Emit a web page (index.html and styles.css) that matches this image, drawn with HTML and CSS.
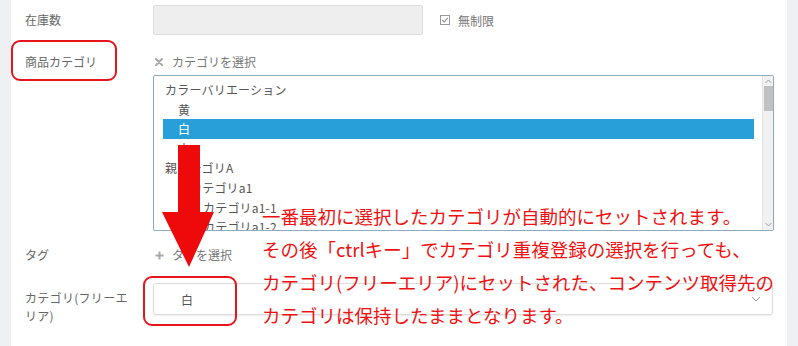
FILE: index.html
```html
<!DOCTYPE html>
<html lang="ja">
<head>
<meta charset="utf-8">
<title>商品カテゴリ</title>
<link rel="stylesheet" href="styles.css">
</head>
<body>
<div class="page">
  <div class="card">
    <div class="row row-stock">
      <div class="label">在庫数</div>
      <div class="ctrl ctrl-inline">
        <div class="input-disabled"></div>
        <label class="check">
          <svg class="check-icon" width="10" height="10" viewBox="0 0 10 10"><rect x="0.5" y="0.5" width="9" height="9" fill="none" stroke="#9a9a9a" stroke-width="1"/><path d="M2.3 5.2 L4.2 7 L7.8 2.8" fill="none" stroke="#8a8a8a" stroke-width="1.1"/></svg>
          <span>無制限</span>
        </label>
      </div>
    </div>

    <div class="row row-cat">
      <div class="label">商品カテゴリ</div>
      <div class="ctrl">
        <div class="picker"><svg class="picker-icon" width="8" height="8" viewBox="0 0 8 8"><path d="M1 1 L7 7 M7 1 L1 7" stroke="#a8a8a8" stroke-width="2" stroke-linecap="round"/></svg><span>カテゴリを選択</span></div>
        <div class="listbox">
          <div class="options">
            <div class="grp">カラーバリエーション</div>
            <div class="opt">黄</div>
            <div class="opt sel">白</div>
            <div class="opt">赤</div>
            <div class="grp">親カテゴリA</div>
            <div class="opt lv1">カテゴリa1</div>
            <div class="opt lv2">カテゴリa1-1</div>
            <div class="opt lv2">カテゴリa1-2</div>
          </div>
          <div class="scrollbar">
            <svg class="sb-arrow" width="9" height="7" viewBox="0 0 9 7"><path d="M1.5 5 L4.5 2 L7.5 5" fill="none" stroke="#a0a0a0" stroke-width="1"/></svg>
            <div class="sb-thumb"></div>
            <div class="sb-space"></div>
            <svg class="sb-arrow" width="9" height="7" viewBox="0 0 9 7"><path d="M1.5 2 L4.5 5 L7.5 2" fill="none" stroke="#a0a0a0" stroke-width="1"/></svg>
          </div>
        </div>
      </div>
    </div>

    <div class="row row-tag">
      <div class="label">タグ</div>
      <div class="ctrl">
        <div class="picker"><svg class="picker-icon plus" width="9" height="9" viewBox="0 0 9 9"><path d="M4.5 0.5 V8.5 M0.5 4.5 H8.5" stroke="#a8a8a8" stroke-width="2"/></svg><span>タグを選択</span></div>
      </div>
    </div>

    <div class="row row-free">
      <div class="label label-wrap">カテゴリ(フリーエリア)</div>
      <div class="ctrl">
        <div class="select">
          <span class="select-value">白</span>
          <svg class="chev" width="10" height="6" viewBox="0 0 10 6"><path d="M1 1 L5 5 L9 1" fill="none" stroke="#9a9a9a" stroke-width="1"/></svg>
        </div>
      </div>
    </div>
  </div>

  <div class="mark mark-label"></div>
  <div class="mark mark-select"></div>
  <svg class="arrow" width="56" height="124" viewBox="0 0 56 124"><path d="M16 0 H38 V67 H52 L27 122 L0 67 H16 Z" fill="#ee0a0a"/></svg>
  <div class="callout">
    <p>一番最初に選択したカテゴリが自動的にセットされます。</p>
    <p>その後「ctrlキー」でカテゴリ重複登録の選択を行っても、</p>
    <p>カテゴリ(フリーエリア)にセットされた、コンテンツ取得先の</p>
    <p>カテゴリは保持したままとなります。</p>
  </div>
</div>
</body>
</html>
```

FILE: styles.css
```css
* { box-sizing: border-box; }
html, body {
  margin: 0;
  padding: 0;
}
body {
  background: #eef0f4;
  font-family: "Noto Sans CJK JP", "Noto Sans", sans-serif;
  color: #666;
  font-size: 12px;
}
.page {
  position: relative;
  width: 798px;
  height: 346px;
  overflow: hidden;
}
.card {
  margin: 0 11px;
  height: 346px;
  background: #fff;
  padding: 5px 13px 0 0;
}
.row {
  display: flex;
  align-items: flex-start;
}
.label {
  width: 142px;
  flex: none;
  padding-left: 14px;
  line-height: 20px;
  color: #666;
}
.ctrl {
  width: 621px;
}
.ctrl-inline {
  display: flex;
  align-items: center;
}
.row-stock .label {
  line-height: 30px;
}
.input-disabled {
  width: 270px;
  height: 30px;
  background: #eeeeee;
  border: 1px solid #dcdcdc;
  border-radius: 2px;
}
.check {
  display: flex;
  align-items: center;
  margin-left: 17px;
  color: #777;
}
.check-icon {
  margin-right: 8px;
}
.row-cat {
  margin-top: 17px;
}
.picker {
  display: flex;
  align-items: center;
  height: 20px;
  line-height: 20px;
  color: #777;
  padding-left: 2px;
}
.picker-icon {
  margin-right: 9px;
}
.picker-icon.plus {
  margin-right: 8px;
}
.listbox {
  margin-top: 3px;
  width: 621px;
  height: 156px;
  border: 1px solid #8eaabd;
  border-radius: 2px;
  display: flex;
  overflow: hidden;
}
.options {
  width: 600px;
  padding: 4px 0 0 9px;
  color: #555;
  letter-spacing: 0.2px;
}
.grp, .opt {
  height: 19.6px;
  line-height: 19.6px;
  white-space: nowrap;
}
.grp {
  padding-left: 2px;
}
.opt {
  padding-left: 15px;
}
.opt.sel {
  background: #289fd8;
  color: #fff;
}
.opt.lv1 {
  padding-left: 27px;
}
.opt.lv2 {
  padding-left: 40px;
}
.scrollbar {
  margin-left: 8px;
  width: 11px;
  background: #f1f1f1;
  border-left: 1px solid #e4e4e4;
  display: flex;
  flex-direction: column;
  align-items: center;
  padding: 2px 0;
}
.sb-arrow {
  flex: none;
}
.sb-thumb {
  margin-top: 1px;
  width: 9px;
  height: 25px;
  background: #c1c1c1;
}
.sb-space {
  flex: 1;
}
.row-tag {
  margin-top: 14px;
}
.row-free {
  margin-top: 18px;
}
.label-wrap {
  width: 142px;
  padding-right: 23px;
  padding-top: 6px;
  line-height: 18px;
  letter-spacing: 0.3px;
}
.select {
  width: 620px;
  height: 32px;
  border: 1px solid #dcdcdc;
  border-radius: 3px;
  box-shadow: 0 1px 2px rgba(0,0,0,0.08);
  display: flex;
  align-items: center;
  padding-left: 27px;
  padding-right: 11px;
  color: #555;
}
.select-value {
  flex: 1;
}
.mark {
  position: absolute;
  border: 2px solid #e8141b;
  border-radius: 9px;
}
.mark-label {
  left: 11px;
  top: 40px;
  width: 106px;
  height: 41px;
}
.mark-select {
  left: 143px;
  top: 276px;
  width: 94px;
  height: 50px;
}
.arrow {
  position: absolute;
  left: 162px;
  top: 145px;
}
.callout {
  position: absolute;
  left: 262px;
  top: 200px;
  color: #ee1111;
  font-size: 18.5px;
  line-height: 33px;
  white-space: nowrap;
}
.callout p {
  margin: 0;
}
```
